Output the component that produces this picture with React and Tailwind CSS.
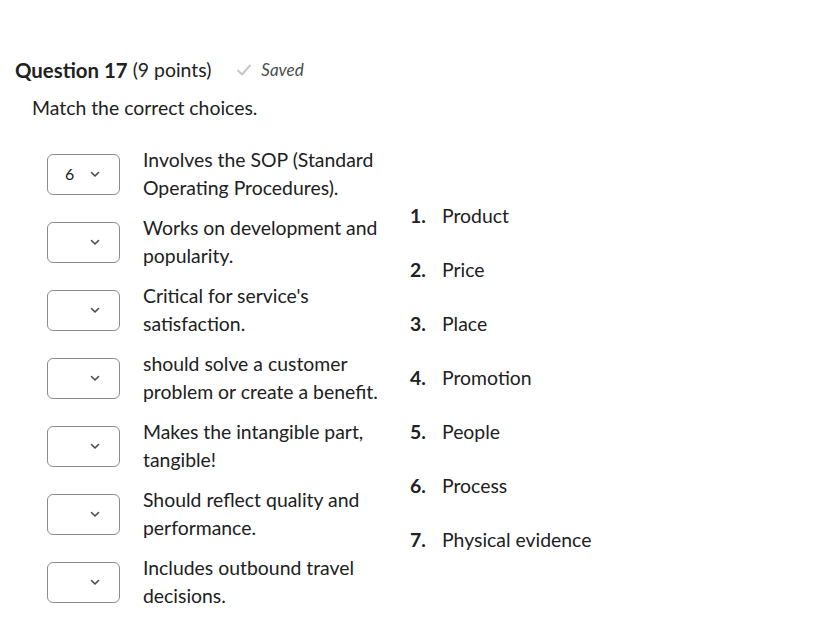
import React from 'react'

const rows = [
  { value: '6', text: ['Involves the SOP (Standard', 'Operating Procedures).'] },
  { value: '', text: ['Works on development and', 'popularity.'] },
  { value: '', text: ["Critical for service's", 'satisfaction.'] },
  { value: '', text: ['should solve a customer', 'problem or create a benefit.'] },
  { value: '', text: ['Makes the intangible part,', 'tangible!'] },
  { value: '', text: ['Should reflect quality and', 'performance.'] },
  { value: '', text: ['Includes outbound travel', 'decisions.'] },
]

const choices = ['Product', 'Price', 'Place', 'Promotion', 'People', 'Process', 'Physical evidence']

const Chevron = () => (
  <svg width="10" height="7" viewBox="0 0 10 7" fill="none">
    <path d="M1.5 1.5 L5 5 L8.5 1.5" stroke="#494c4e" strokeWidth="1.6" strokeLinecap="round" strokeLinejoin="round" />
  </svg>
)

const Check = () => (
  <svg width="16" height="14" viewBox="0 0 16 14" fill="none">
    <path d="M2 7.5 L6 11.5 L14 2.5" stroke="#c3c8cc" strokeWidth="2" strokeLinecap="round" strokeLinejoin="round" />
  </svg>
)

export default function App() {
  return (
    <div className="min-h-screen bg-white text-[#202122] pt-[56px] pl-[15px]" style={{ fontFamily: 'Lato, "Noto Sans", sans-serif' }}>
      <div className="flex items-center h-[28px]">
        <span className="text-[20.4px] font-bold">Question 17</span>
        <span className="text-[19.4px] ml-[5px]">(9 points)</span>
        <span className="ml-[25px] flex items-center gap-[9px]">
          <Check />
          <span className="italic text-[17px] text-[#494c4e]">Saved</span>
        </span>
      </div>
      <p className="mt-[10px] ml-[17px] text-[19.4px] leading-[28px]">Match the correct choices.</p>

      <div className="mt-[24px] ml-[32px] flex items-center">
        <div className="flex flex-col gap-[12px] w-[363px]">
          {rows.map((r, i) => (
            <div key={i} className="flex items-center">
              <div className="w-[73px] h-[41px] border border-[#868c8f] rounded-[6px] flex items-center justify-between pl-[17px] pr-[19px] shrink-0">
                <span className="text-[16px]">{r.value}</span>
                <Chevron />
              </div>
              <div className="ml-[23px] text-[19.4px] leading-[28px]">
                <div>{r.text[0]}</div>
                <div>{r.text[1]}</div>
              </div>
            </div>
          ))}
        </div>
        <ol className="flex flex-col">
          {choices.map((c, i) => (
            <li key={i} className="flex h-[54px] items-center text-[19.4px] leading-[28px]">
              <span className="w-[32px] font-bold">{i + 1}.</span>
              <span>{c}</span>
            </li>
          ))}
        </ol>
      </div>
    </div>
  )
}
